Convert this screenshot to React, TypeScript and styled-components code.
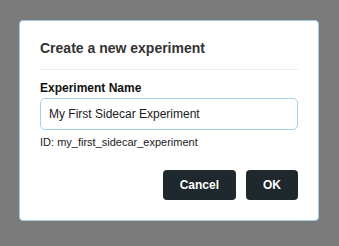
import React, { useState } from "react";
import styled, { createGlobalStyle } from "styled-components";

const GlobalStyle = createGlobalStyle`
  html, body {
    margin: 0;
    padding: 0;
    background: #7b7b7b;
    font-family: "Liberation Sans", Arial, Helvetica, sans-serif;
  }
`;

// 회색 배경 위에 다이얼로그를 얹는 오버레이
const Overlay = styled.div`
  width: 339px;
  height: 246px;
  box-sizing: border-box;
  padding: 20px 21px 25px 19px;
  background: #7b7b7b;
`;

const Dialog = styled.div`
  box-sizing: border-box;
  width: 300px;
  height: 201px;
  padding: 19px 20px 20px;
  background: #ffffff;
  border: 1px solid #9fcbe8;
  border-radius: 4px;
  display: flex;
  flex-direction: column;
`;

const Title = styled.h2`
  margin: 0;
  padding-bottom: 12px;
  border-bottom: 1px solid #e3eef7;
  font-size: 14px;
  line-height: 17px;
  font-weight: 700;
  color: #333333;
`;

const Field = styled.label`
  display: flex;
  flex-direction: column;
  margin-top: 11px;

  .label {
    font-size: 12px;
    line-height: 14px;
    font-weight: 700;
    color: #111111;
    margin-bottom: 3px;
  }

  input {
    box-sizing: border-box;
    width: 100%;
    height: 32px;
    padding: 0 8px;
    border: 1px solid #a6d0ec;
    border-radius: 5px;
    font-family: inherit;
    font-size: 12px;
    color: #1a1a1a;
    outline: none;
  }
`;

const Hint = styled.span`
  margin-top: 6px;
  font-size: 11px;
  line-height: 13px;
  color: #1a1a1a;
`;

const Actions = styled.div`
  margin-top: auto;
  display: flex;
  justify-content: flex-end;
  gap: 10px;
`;

const Button = styled.button`
  height: 30px;
  padding: 0 17px;
  border: none;
  border-radius: 4px;
  background: #1f282c;
  color: #ffffff;
  font-family: inherit;
  font-size: 12px;
  font-weight: 700;
  cursor: pointer;
`;

const toId = (name: string) =>
  name.trim().toLowerCase().replace(/[^a-z0-9]+/g, "_");

export default function App() {
  const [name, setName] = useState("My First Sidecar Experiment");

  return (
    <>
      <GlobalStyle />
      <Overlay>
        <Dialog>
          <Title>Create a new experiment</Title>
          <Field>
            <span className="label">Experiment Name</span>
            <input value={name} onChange={(e) => setName(e.target.value)} />
          </Field>
          <Hint>ID: {toId(name)}</Hint>
          <Actions>
            <Button>Cancel</Button>
            <Button>OK</Button>
          </Actions>
        </Dialog>
      </Overlay>
    </>
  );
}
